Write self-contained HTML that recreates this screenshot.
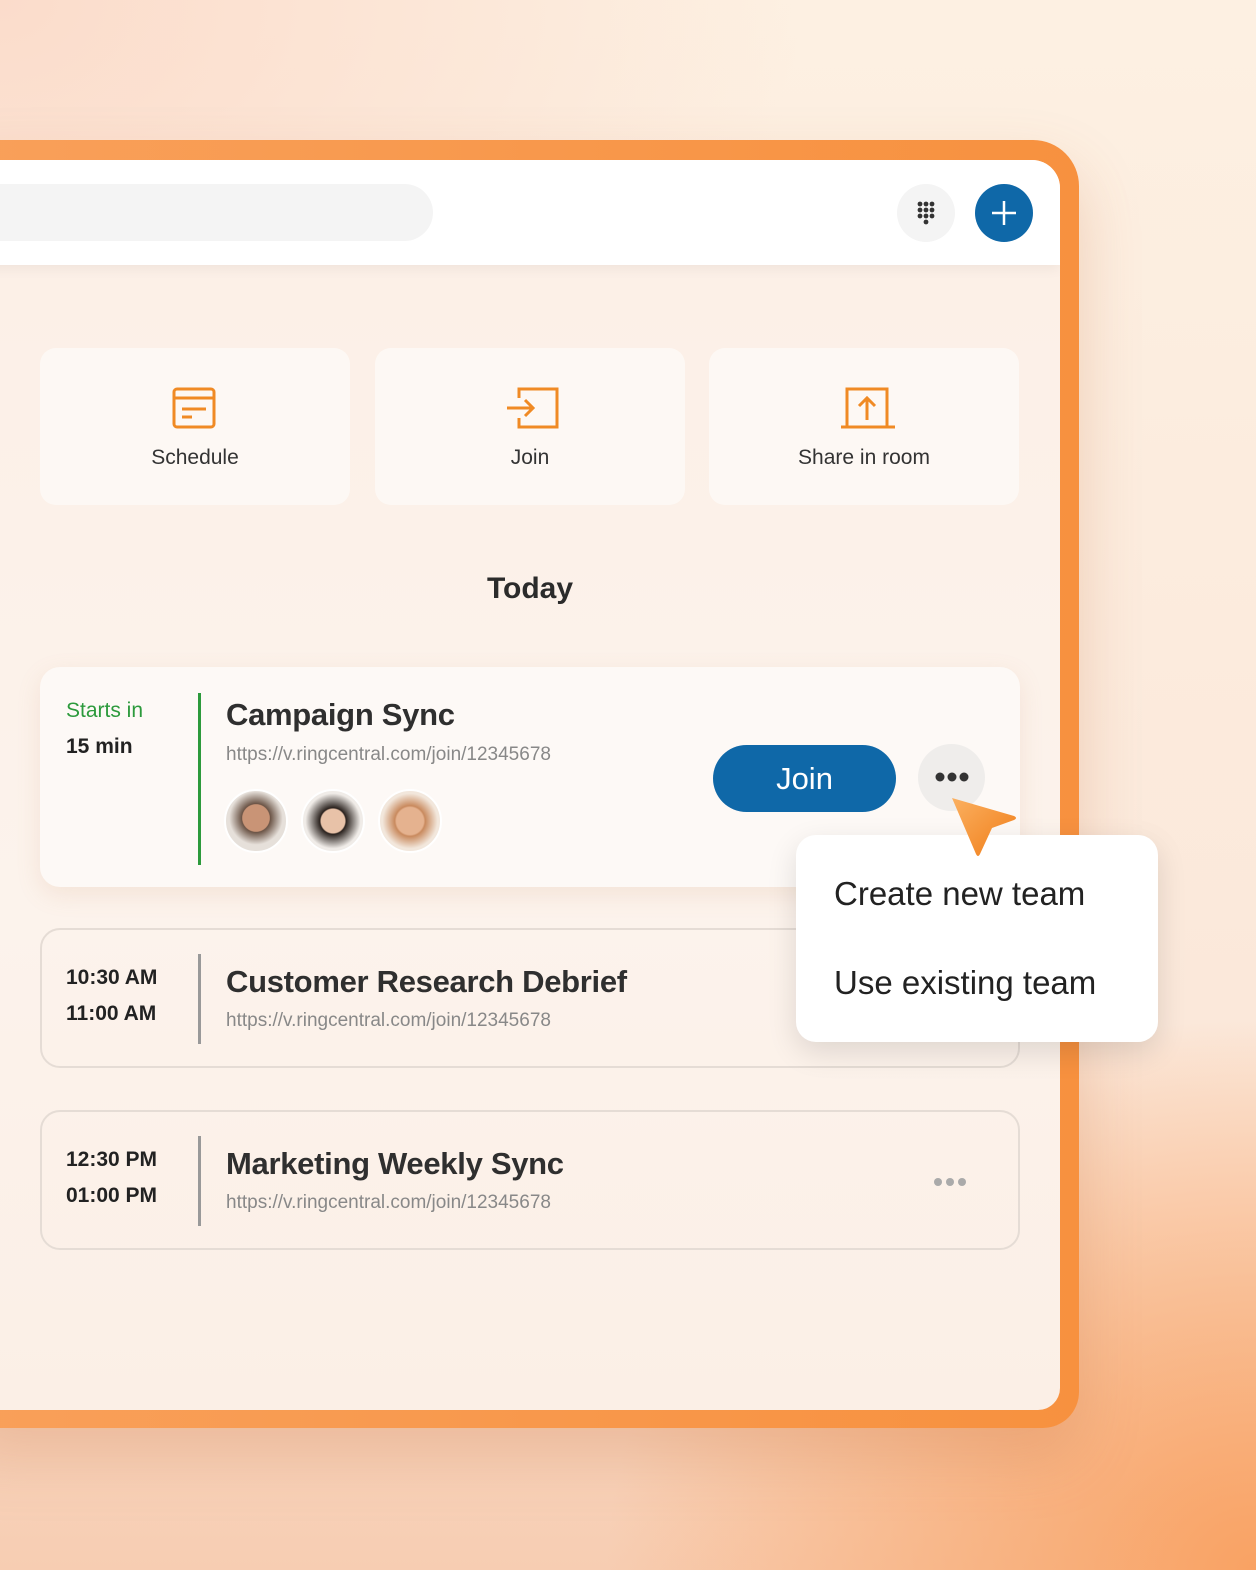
<!DOCTYPE html>
<html><head><style>
*{margin:0;padding:0;box-sizing:border-box}
body{width:1256px;height:1570px;overflow:hidden;position:relative;font-family:"Liberation Sans",sans-serif;
background:radial-gradient(ellipse 650px 550px at 1256px 1570px,#f9a263,rgba(249,162,99,0)),radial-gradient(ellipse 800px 600px at 0 0,#fbdccb,transparent),linear-gradient(180deg,#fdf0e2 0%,#fbe8da 65%,#f7cdb2 100%);}
.frame{position:absolute;left:-40px;top:140px;width:1119px;height:1288px;border-radius:0 46px 36px 0;background:linear-gradient(90deg,#f9a05a,#f7913f);box-shadow:0 30px 60px rgba(200,110,60,.25)}
.panel{position:absolute;left:-40px;top:160px;width:1100px;height:1250px;border-radius:0 28px 22px 0;background:linear-gradient(180deg,#fcefe6,#fcf3ec 60%,#fbefe6);overflow:hidden}
.hdr{position:absolute;left:0;top:0;width:100%;height:105px;background:#fff;box-shadow:0 4px 12px rgba(0,0,0,.05)}
.search{position:absolute;left:0;top:24px;width:473px;height:57px;border-radius:30px;background:#f4f4f4}
.dial{position:absolute;left:937px;top:24px;width:58px;height:58px;border-radius:50%;background:#f4f4f4}
.plus{position:absolute;left:1015px;top:24px;width:58px;height:58px;border-radius:50%;background:#0f68a8}
.tile{position:absolute;top:188px;width:310px;height:157px;border-radius:16px;background:#fdf8f4;text-align:center;font-size:21px;color:#333}
.tile svg{position:absolute;left:130px;top:38px}
.tile span{position:absolute;left:0;right:0;top:98px}
.today{position:absolute;left:0;width:1140px;top:412px;text-align:center;font-size:30px;font-weight:bold;color:#2b2b2b}
.card{position:absolute;left:80px;width:980px;border-radius:20px}
.time{position:absolute;left:26px;font-size:21px;color:#222;line-height:36px;font-weight:bold}
.bar{position:absolute;left:158px;width:3px}
.title{position:absolute;left:186px;font-size:31px;font-weight:bold;color:#2f2f2f;letter-spacing:-0.3px}
.url{position:absolute;left:186px;font-size:19px;color:#888}
.av{position:absolute;top:122px;width:64px;height:64px;border-radius:50%;border:2px solid #fff}
.menu{position:absolute;left:796px;top:835px;width:362px;height:207px;background:#fff;border-radius:20px;box-shadow:0 10px 30px rgba(0,0,0,.12);font-size:33px;color:#222}
.menu div{position:absolute;left:38px}
</style></head><body>
<div class="frame"></div>
<div class="panel">
 <div class="hdr">
  <div class="search"></div>
  <div class="dial"><svg width="58" height="58" viewBox="0 0 58 58" fill="#333"><g><circle cx="23" cy="20" r="2.4"/><circle cx="29" cy="20" r="2.4"/><circle cx="35" cy="20" r="2.4"/><circle cx="23" cy="26" r="2.4"/><circle cx="29" cy="26" r="2.4"/><circle cx="35" cy="26" r="2.4"/><circle cx="23" cy="32" r="2.4"/><circle cx="29" cy="32" r="2.4"/><circle cx="35" cy="32" r="2.4"/><circle cx="29" cy="38" r="2.4"/></g></svg></div>
  <div class="plus"><svg width="58" height="58"><path d="M29 17v24M17 29h24" stroke="#fff" stroke-width="2.5"/></svg></div>
 </div>
 <div class="tile" style="left:80px"><svg width="46" height="44" viewBox="0 0 46 44" fill="none" stroke="#f08a24" stroke-width="3"><rect x="4" y="3" width="40" height="38" rx="3"/><path d="M4 12h40M12 23h24M12 31h10"/></svg><span>Schedule</span></div>
 <div class="tile" style="left:415px"><svg width="56" height="44" viewBox="0 0 56 44" fill="none" stroke="#f08a24" stroke-width="3"><path d="M14 12V3h38v38H14v-9"/><path d="M2 22h26M20 14l8 8-8 8"/></svg><span>Join</span></div>
 <div class="tile" style="left:749px"><svg width="58" height="44" viewBox="0 0 58 44" fill="none" stroke="#f08a24" stroke-width="3"><path d="M8 40V3h40v37M2 41h54M28 34V12M20 20l8-8 8 8"/></svg><span>Share in room</span></div>
 <div class="today">Today</div>
 <div class="card" style="top:507px;height:220px;background:#fdf9f6;box-shadow:0 8px 24px rgba(200,140,100,.15)">
  <div class="time" style="top:26px"><span style="color:#2c9a3c;font-weight:normal">Starts in</span><br>15 min</div>
  <div class="bar" style="top:26px;height:172px;background:#2c9a3c"></div>
  <div class="title" style="top:30px">Campaign Sync</div>
  <div class="url" style="top:77px">https://v.ringcentral.com/join/12345678</div>
  <div class="av" style="left:184px;background:radial-gradient(circle at 50% 45%,#c99476 30%,#6b5446 32%,#e6e0da 60%)"></div>
  <div class="av" style="left:261px;background:radial-gradient(circle at 50% 50%,#e8c2a8 28%,#2a221e 31%,#f0ece8 65%)"></div>
  <div class="av" style="left:338px;background:radial-gradient(circle at 50% 50%,#e5b28f 32%,#c98a5e 36%,#f2e7dc 65%)"></div>
  <div style="position:absolute;left:673px;top:78px;width:183px;height:67px;border-radius:34px;background:#0f68a8;color:#fff;font-size:31px;text-align:center;line-height:67px">Join</div>
  <div style="position:absolute;left:878px;top:77px;width:67px;height:67px;border-radius:50%;background:#efedeb"><svg width="67" height="67" fill="#333"><circle cx="22" cy="33" r="4.5"/><circle cx="34" cy="33" r="4.5"/><circle cx="46" cy="33" r="4.5"/></svg></div>
 </div>
 <div class="card" style="top:768px;height:140px;border:2px solid #e5dcd5">
  <div class="time" style="top:30px;left:24px">10:30 AM<br>11:00 AM</div>
  <div class="bar" style="top:24px;height:90px;background:#999;left:156px"></div>
  <div class="title" style="top:34px;left:184px">Customer Research Debrief</div>
  <div class="url" style="top:80px;left:184px">https://v.ringcentral.com/join/12345678</div>
 </div>
 <div class="card" style="top:950px;height:140px;border:2px solid #e5dcd5">
  <div class="time" style="top:30px;left:24px">12:30 PM<br>01:00 PM</div>
  <div class="bar" style="top:24px;height:90px;background:#999;left:156px"></div>
  <div class="title" style="top:34px;left:184px">Marketing Weekly Sync</div>
  <div class="url" style="top:80px;left:184px">https://v.ringcentral.com/join/12345678</div>
  <svg style="position:absolute;left:890px;top:60px" width="40" height="20" fill="#aaa"><circle cx="6" cy="10" r="4"/><circle cx="18" cy="10" r="4"/><circle cx="30" cy="10" r="4"/></svg>
 </div>
</div>
<div class="menu"><div style="top:40px">Create new team</div><div style="top:129px">Use existing team</div></div>
<svg style="position:absolute;left:948px;top:796px" width="72" height="64" viewBox="0 0 72 64"><defs><linearGradient id="g" x1="0" y1="0" x2="1" y2="1"><stop offset="0" stop-color="#fbb060"/><stop offset="1" stop-color="#f07d18"/></linearGradient></defs><path d="M4 2 L66 20 Q70 22 66 24 L44 32 L32 58 Q30 62 28 58 Z" fill="url(#g)"/></svg>
</body></html>
